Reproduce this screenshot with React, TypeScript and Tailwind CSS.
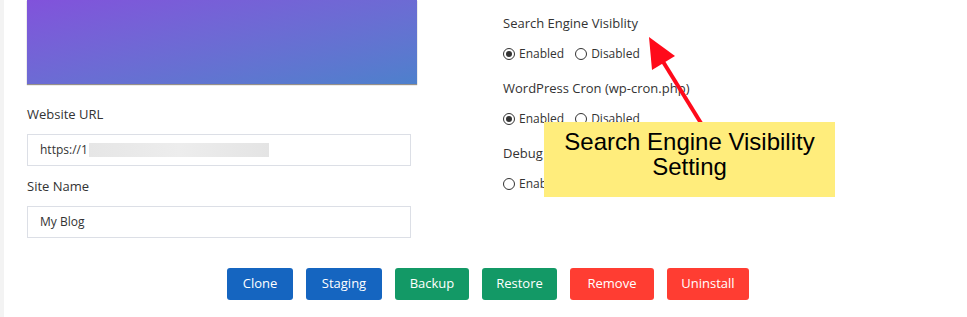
const buttons = [
  { label: "Clone", width: "w-[66px]", color: "bg-[#1565c0]" },
  { label: "Staging", width: "w-[76px]", color: "bg-[#1565c0]" },
  { label: "Backup", width: "w-[74px]", color: "bg-[#139966]" },
  { label: "Restore", width: "w-[75px]", color: "bg-[#139966]" },
  { label: "Remove", width: "w-[84px]", color: "bg-[#ff3d32]" },
  { label: "Uninstall", width: "w-[82px]", color: "bg-[#ff3d32]" },
];

function Radio({ label, checked }: { label: string; checked?: boolean }) {
  return (
    <span className="flex items-center gap-[4px] text-[12px] text-[#333]">
      <span className="flex h-[12px] w-[12px] items-center justify-center rounded-full border border-[#333] bg-white">
        {checked && <span className="h-[6px] w-[6px] rounded-full bg-[#333]" />}
      </span>
      {label}
    </span>
  );
}

function Setting({ title, first, enabled }: { title: string; first?: boolean; enabled?: boolean }) {
  return (
    <div className={first ? "" : "mt-[14px]"}>
      <div className="h-5 text-[13px] leading-5 text-[#333]">{title}</div>
      <div className="mt-[11px] flex h-5 items-center gap-[11px]">
        <Radio label="Enabled" checked={enabled} />
        <Radio label="Disabled" checked={!enabled} />
      </div>
    </div>
  );
}

export default function App() {
  return (
    <div className="relative h-[317px] w-[967px] overflow-hidden border-l-4 border-[#f3f3f3] bg-white font-['Open_Sans',sans-serif]">
      <div className="flex pl-[23px]">
        {/* Left column */}
        <div className="w-[390px]">
          <div className="h-[84px] w-[390px] bg-linear-to-br from-[#8152db] to-[#4d80cc] shadow-[0_1px_1px_rgba(80,70,60,0.6)]" />
          <div className="mt-5 h-5 text-[13px] leading-5 text-[#333]">Website URL</div>
          <div className="mt-[10px] flex h-8 w-[384px] items-center border border-[#dcdfe6] bg-white pl-[12px] text-[12px] text-[#333]">
            https://1
            <span className="ml-[1px] h-[14px] w-[180px] bg-linear-to-r from-[#e6e6e6] via-[#ededed] to-[#e4e4e4]" />
          </div>
          <div className="mt-[10px] h-5 text-[13px] leading-5 text-[#333]">Site Name</div>
          <div className="mt-[10px] flex h-8 w-[384px] items-center border border-[#dcdfe6] bg-white pl-[12px] text-[12px] text-[#333]">
            My Blog
          </div>
        </div>

        {/* Right column */}
        <div className="ml-[86px] pt-[13px]">
          <Setting title="Search Engine Visiblity" first enabled />
          <Setting title="WordPress Cron (wp-cron.php)" enabled />
          <Setting title="Debug Mode" />
        </div>
      </div>

      {/* Actions */}
      <div className="mt-[30px] flex justify-center gap-[13px] pl-[5px]">
        {buttons.map((b) => (
          <button
            key={b.label}
            className={`${b.width} ${b.color} h-8 rounded-[3px] text-[13px] text-white`}
          >
            {b.label}
          </button>
        ))}
      </div>

      {/* Annotation */}
      <svg className="absolute left-0 top-0" width="967" height="317" viewBox="0 0 967 317">
        <line x1="658" y1="60" x2="700" y2="128" stroke="#ff0a1a" strokeWidth="4" />
        <polygon points="645,37 671,56 648,70" fill="#ff0a1a" />
      </svg>
      <div className="absolute left-[540px] top-[122px] flex h-[75px] w-[291px] flex-col items-center bg-[#ffed7c] pt-[7px] font-['Liberation_Sans',Arial,sans-serif] text-[24px] leading-[25px] text-black">
        <span>Search Engine Visibility</span>
        <span>Setting</span>
      </div>
    </div>
  );
}
